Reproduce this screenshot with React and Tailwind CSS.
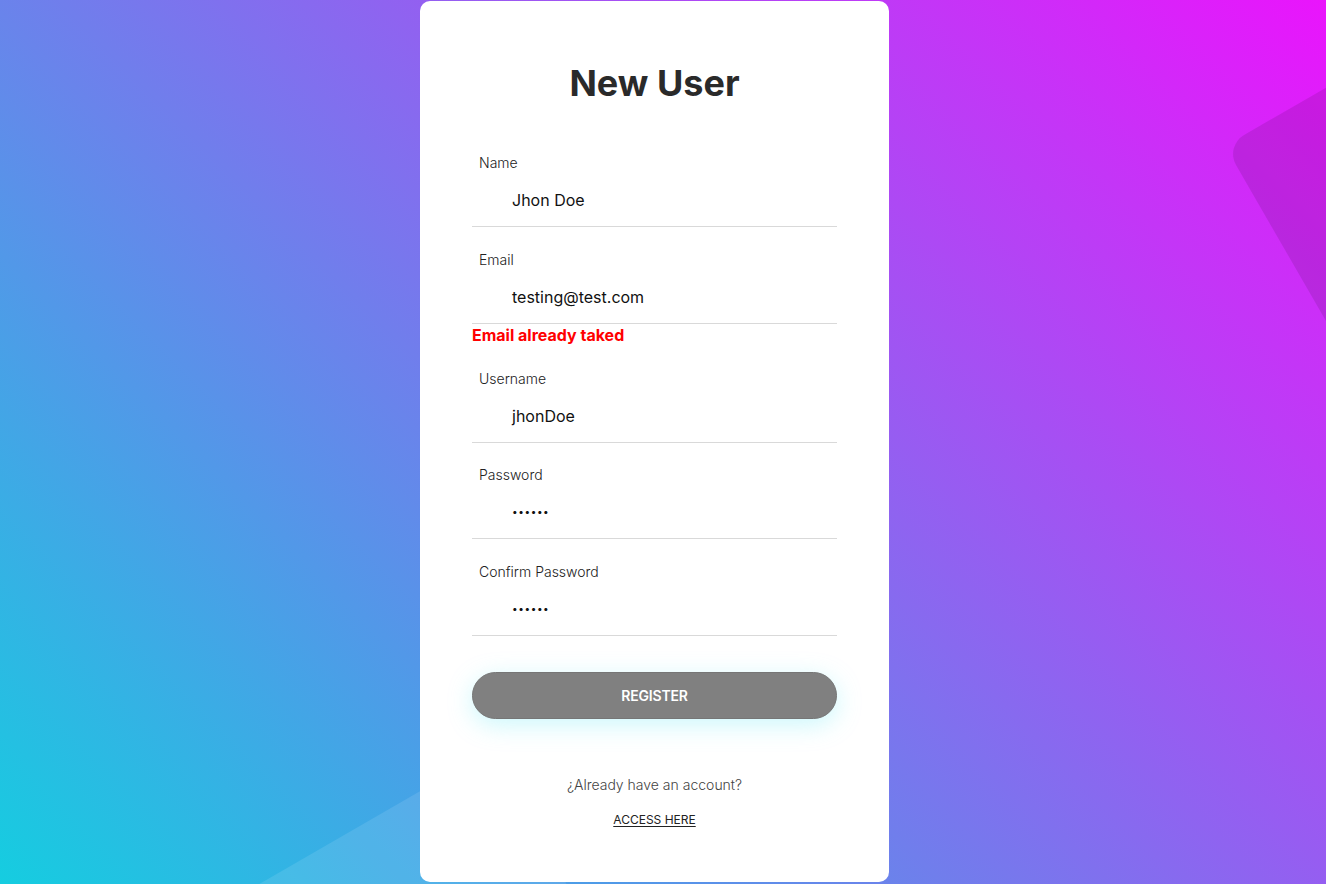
import React from "react";

function Field({ label, value, password, className = "" }) {
  return (
    <div className={className}>
      <div className="h-5 pl-[7px] text-[14px] leading-5 font-light text-[#222]">{label}</div>
      <div className="flex h-[54px] items-center border-b border-[#d9d9d9] pl-10">
        {password ? (
          <span className="text-[10px] tracking-[0.6px] text-[#111]">••••••</span>
        ) : (
          <span className="text-[16px] text-[#111]">{value}</span>
        )}
      </div>
    </div>
  );
}

export default function App() {
  return (
    <div
      className="relative h-[884px] w-full overflow-hidden bg-[linear-gradient(45deg,#15cde0,#ea14fc)]"
      style={{ fontFamily: "Inter, 'Noto Sans', sans-serif" }}
    >
      {/* decorative shapes */}
      <div className="absolute left-[1225px] top-[146px] h-[600px] w-[600px] origin-top-left -rotate-[30deg] rounded-[22px] bg-black/10" />
      <div className="absolute left-[100px] top-[976px] h-[450px] w-[450px] origin-top-left -rotate-[30deg] rounded-[22px] bg-white/10" />

      <div className="relative ml-[420px] mt-px flex h-[881px] w-[469px] flex-col rounded-[10px] bg-white px-[52px]">
        <h1 className="mt-[58px] text-center text-[36px] font-bold leading-[48px] text-[#2a2a2a]">
          New User
        </h1>

        <Field className="mt-[46px]" label="Name" value="Jhon Doe" />
        <Field className="mt-[23px]" label="Email" value="testing@test.com" />
        <div className="h-[22px] text-[16px] font-bold leading-[22px] text-[#ff0000]">Email already taked</div>
        <Field className="mt-[23px]" label="Username" value="jhonDoe" />
        <Field className="mt-[22px]" label="Password" password />
        <Field className="mt-[23px]" label="Confirm Password" password />

        <button className="mt-[36px] h-[47px] w-full shrink-0 rounded-full border border-[#767676] bg-[#808080] text-[14px] font-semibold tracking-[-0.2px] text-white shadow-[0_6px_24px_rgba(110,235,245,0.35)]">
          REGISTER
        </button>

        <p className="mt-[56px] text-center text-[14px] leading-5 font-light text-[#444]">¿Already have an account?</p>
        <a className="mt-[15px] self-center text-[12px] leading-5 text-[#222] underline underline-offset-2">ACCESS HERE</a>
      </div>
    </div>
  );
}
